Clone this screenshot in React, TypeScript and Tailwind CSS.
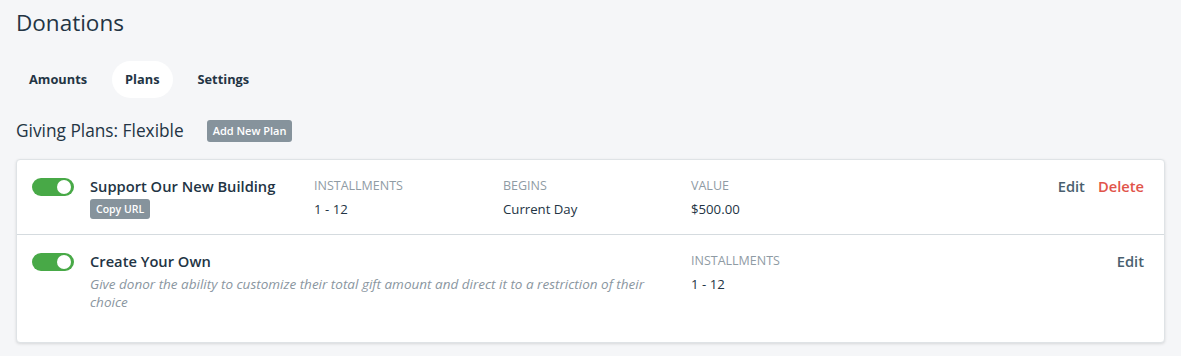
import { useState } from 'react'

type Campo = { etiqueta: string; valor: string; col: string }

interface Plan {
  id: string
  titulo: string
  descripcion?: string
  copiarUrl?: boolean
  campos: Campo[]
  borrar?: boolean
}

const PLANES: Plan[] = [
  {
    id: 'edificio',
    titulo: 'Support Our New Building',
    copiarUrl: true,
    campos: [
      { etiqueta: 'INSTALLMENTS', valor: '1 - 12', col: 'w-[189px]' },
      { etiqueta: 'BEGINS', valor: 'Current Day', col: 'w-[188px]' },
      { etiqueta: 'VALUE', valor: '$500.00', col: 'w-[188px]' },
    ],
    borrar: true,
  },
  {
    id: 'propio',
    titulo: 'Create Your Own',
    descripcion:
      'Give donor the ability to customize their total gift amount and direct it to a restriction of their choice',
    campos: [{ etiqueta: 'INSTALLMENTS', valor: '1 - 12', col: 'w-[188px]' }],
  },
]

const TABS = ['Amounts', 'Plans', 'Settings']

function Toggle({ activo, onClick }: { activo: boolean; onClick: () => void }) {
  return (
    <button
      onClick={onClick}
      className={`relative h-[18px] w-[42px] shrink-0 rounded-full ${activo ? 'bg-[#48a947]' : 'bg-[#c5cdd3]'}`}
    >
      <span
        className={`absolute top-[2px] h-[14px] w-[14px] rounded-full bg-white ${activo ? 'right-[3px]' : 'left-[3px]'}`}
      />
    </button>
  )
}

function FilaPlan({ plan }: { plan: Plan }) {
  const [activo, setActivo] = useState(true)
  const conDescripcion = !!plan.descripcion
  return (
    <div
      className={`flex items-start pl-[15px] pr-5 border-b border-[#d5dbdf] last:border-b-0 pt-[17px] ${conDescripcion ? 'h-[107px]' : 'h-[75px]'}`}
    >
      <div className="pt-px">
        <Toggle activo={activo} onClick={() => setActivo(!activo)} />
      </div>
      <div className={`ml-4 ${conDescripcion ? 'w-[601px] pr-[24px]' : 'w-[224px]'}`}>
        <p className="text-[14.7px] font-semibold leading-[18px] text-[#233444]">{plan.titulo}</p>
        {plan.copiarUrl && (
          <span className="mt-[4px] inline-block rounded-[3px] bg-[#86939c] px-[6px] py-[3px] text-[10.5px] font-semibold leading-[14px] text-white">
            Copy URL
          </span>
        )}
        {plan.descripcion && (
          <p className="mt-[5px] text-[13.5px] italic leading-[18px] text-[#8a969f]">{plan.descripcion}</p>
        )}
      </div>
      {plan.campos.map((c) => (
        <div key={c.etiqueta} className={c.col}>
          <p className="text-[12.5px] leading-[18px] text-[#8f9ba4]">{c.etiqueta}</p>
          <p className="mt-[5px] text-[13.2px] leading-[18px] text-[#233444]">{c.valor}</p>
        </div>
      ))}
      <div className="ml-auto flex gap-[13px] text-[14.7px] font-semibold leading-[18px]">
        <button className="text-[#4a5f6f]">Edit</button>
        {plan.borrar && <button className="text-[#e1544a]">Delete</button>}
      </div>
    </div>
  )
}

export default function App() {
  const [tab, setTab] = useState('Plans')
  return (
    <div className="min-h-[356px] bg-[#f5f6f8] px-4 pt-[9px] font-['Open_Sans','Liberation_Sans',sans-serif] text-[#233444]">
      <h1 className="text-[22.5px] leading-[28px] text-[#233444]">Donations</h1>

      <nav className="mt-[24px] flex gap-3">
        {TABS.map((t) => (
          <button
            key={t}
            onClick={() => setTab(t)}
            className={`h-[37px] rounded-full px-[13px] text-[12.8px] font-bold ${tab === t ? 'bg-white' : ''}`}
          >
            {t}
          </button>
        ))}
      </nav>

      <div className="mt-[22px] flex items-center gap-[23px]">
        <h2 className="text-[17.3px] leading-[22px]">Giving Plans: Flexible</h2>
        <span className="rounded-[3px] bg-[#86939c] px-[6px] py-[4px] text-[11px] font-semibold leading-[14px] text-white">
          Add New Plan
        </span>
      </div>

      <div className="mt-[17px] rounded-[4px] border border-[#dfe3e6] bg-white shadow-[0_1px_3px_rgba(0,0,0,0.12)]">
        {PLANES.map((p) => (
          <FilaPlan key={p.id} plan={p} />
        ))}
      </div>
    </div>
  )
}
